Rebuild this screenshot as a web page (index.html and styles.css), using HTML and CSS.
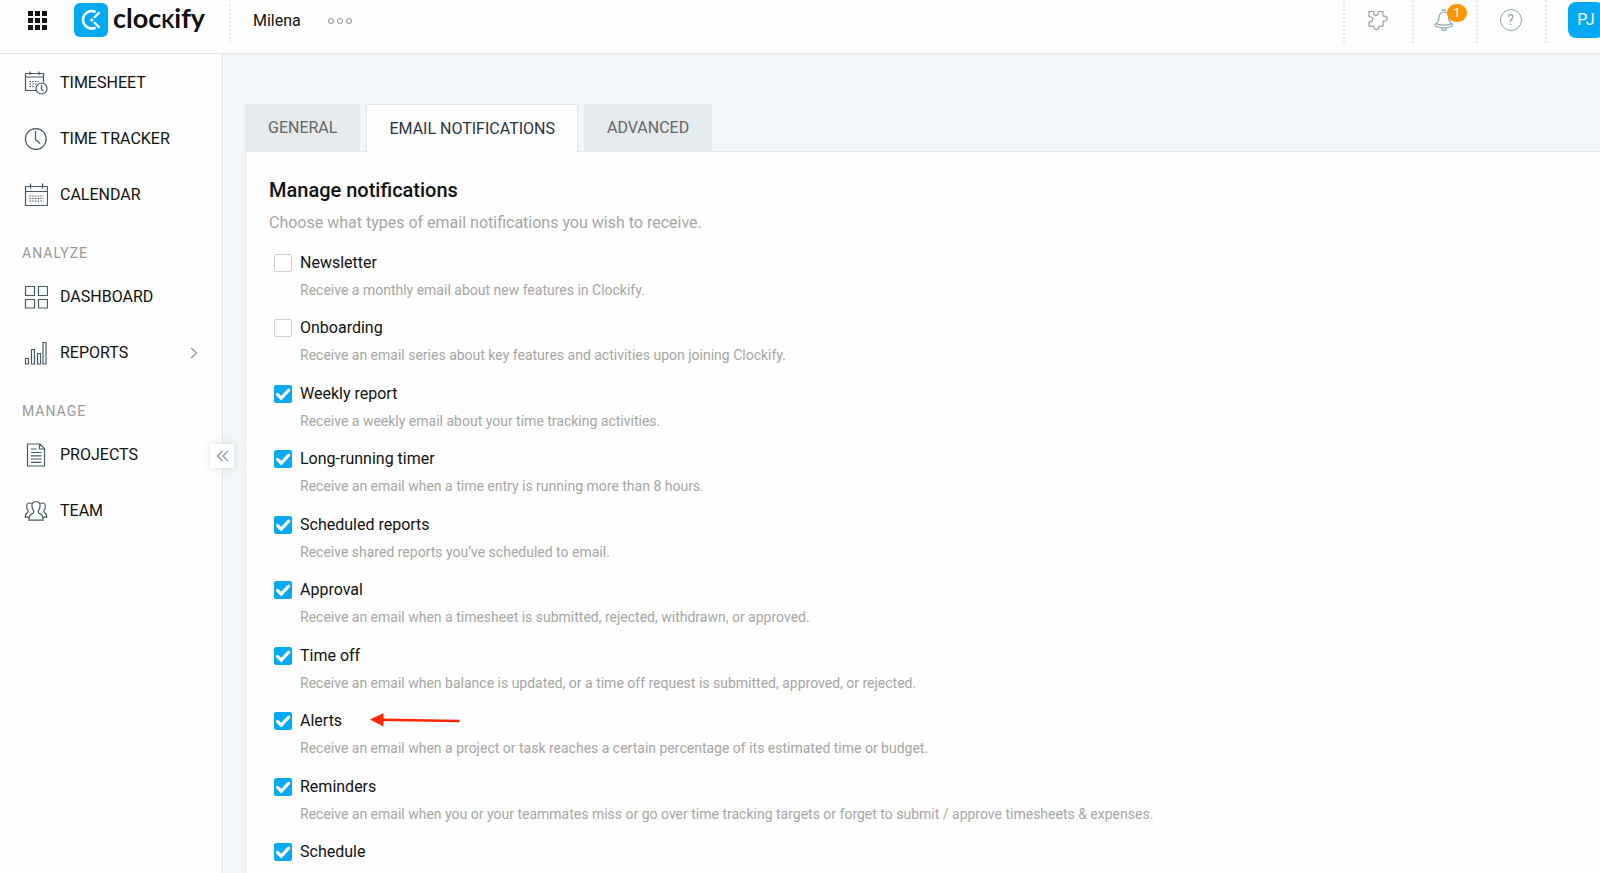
FILE: index.html
```html
<!DOCTYPE html>
<html lang="en">
<head>
<meta charset="utf-8">
<meta name="viewport" content="width=device-width, initial-scale=1">
<title>Clockify – Email notifications</title>
<link rel="stylesheet" href="styles.css">
</head>
<body>
<header class="topbar">
  <div class="topbar-brand">
    <button class="icon-button apps" aria-label="Apps">
      <svg width="19" height="19" viewBox="0 0 19 19" fill="#111"><path d="M0 0h5v5H0zM7 0h5v5H7zM14 0h5v5h-5zM0 7h5v5H0zM7 7h5v5H7zM14 7h5v5h-5zM0 14h5v5H0zM7 14h5v5H7zM14 14h5v5h-5z"/></svg>
    </button>
    <a class="brand" href="#">
      <svg width="34" height="34" viewBox="0 0 34 34" fill="none" aria-hidden="true">
        <rect width="34" height="34" rx="6" fill="#03a9f4"/>
        <path d="M20.6 8.6A8.7 8.7 0 1 0 20.6 25" stroke="#fff" stroke-width="2.6" stroke-linecap="round"/>
        <path d="M20.6 14.2l4.3-4.3M20.6 19.8l4.3 4.3" stroke="#fff" stroke-width="2.3" stroke-linecap="round"/>
        <circle cx="17.8" cy="17" r="1.6" fill="#fff"/>
      </svg>
      <span class="wordmark">cloc<span class="wordmark-k">k</span>ify</span>
    </a>
  </div>
  <div class="workspace">
    <span>Milena</span>
    <button class="icon-button" aria-label="Workspace menu">
      <svg width="26" height="8" viewBox="0 0 26 8" fill="none" stroke="#a3a3a3" stroke-width="1.1"><circle cx="4" cy="4" r="2.5"/><circle cx="13" cy="4" r="2.5"/><circle cx="22" cy="4" r="2.5"/></svg>
    </button>
  </div>
  <div class="topbar-tools">
    <button class="tool" aria-label="Integrations">
      <svg width="22" height="22" viewBox="0 0 22 22" fill="none" stroke="#8fa4ae" stroke-width="1.2" stroke-linejoin="round"><path d="M2 2.500h3.800c.7 0 1 .5.800 1.100-.4 1.500.7 2.700 2.300 2.700s2.700-1.200 2.300-2.700c-.2-.6.1-1.100.8-1.100h4v3.900c0 .7.500 1 1.100.8 1.600-.5 3.100.7 3.100 2.400s-1.500 2.900-3.100 2.400c-.6-.2-1.100.1-1.100.8v4.300h-3.400c-.7 0-.9.4-.8 1 .3 1.500-.8 2.500-2.400 2.500s-2.700-1-2.400-2.500c.1-.6-.1-1-.8-1H2v-3.600c0-.7.500-1 1.100-.8 1.500.4 2.600-.8 2.600-2.400S4.600 7.500 3.100 7.900C2.500 8.100 2 7.800 2 7.100z"/></svg>
    </button>
    <button class="tool" aria-label="Notifications, 1 unread">
      <svg width="20" height="24" viewBox="0 0 20 24" fill="none" stroke="#8fa4ae" stroke-width="1.200" stroke-linejoin="round"><path d="M8.200 3.300a1.700 1.700 0 1 1 3.400 0M9.900 4C6.500 4 5.200 6.300 5 9.500c-.2 3-.6 4.700-3.200 6.300-1 .7-.9 2 .2 2.500 4.500 1.900 11 1.900 15.700 0 1.100-.5 1.200-1.800.2-2.500-2.600-1.600-3-3.300-3.200-6.300C14.500 6.300 13.200 4 9.900 4zM2.500 15.900c4.500 1.600 10.300 1.600 14.800 0M7.300 19.700c.1 1.600 1 2.700 2.600 2.700s2.500-1.100 2.600-2.700"/></svg>
      <span class="badge">1</span>
    </button>
    <button class="tool" aria-label="Help">
      <span class="help">?</span>
    </button>
    <div class="account"><button class="avatar" aria-label="Account">PJ</button></div>
  </div>
</header>

<div class="layout">
  <nav class="sidebar">
    <a class="nav-item" href="#">
      <svg class="nav-icon" viewBox="0 0 24 24"><path d="M12.500 19.500H1.500v-17h18v9M1.500 6h18M6 .5v3.500M15 .5v3.500"/><path class="dots" d="M5.500 10.500h9M5.500 13h7M5.500 15.500h5"/><circle cx="17.500" cy="17.500" r="5.500"/><path d="M17.500 14v3.800l1.800 2"/></svg>
      <span>TIMESHEET</span>
    </a>
    <a class="nav-item" href="#">
      <svg class="nav-icon" viewBox="0 0 24 24"><circle cx="11.800" cy="12" r="10.400"/><path d="M11.500 4v8.500l4.500 4"/></svg>
      <span>TIME TRACKER</span>
    </a>
    <a class="nav-item" href="#">
      <svg class="nav-icon" viewBox="0 0 24 24"><path d="M1.500 3.500h22v19h-22zM1.500 8.500h22M6.500.5v5M18.500.5v5"/><path class="dots" d="M5.500 13h14M5.500 15.500h14M5.500 18h14"/></svg>
      <span>CALENDAR</span>
    </a>
    <h2 class="nav-heading">ANALYZE</h2>
    <a class="nav-item" href="#">
      <svg class="nav-icon" viewBox="0 0 24 24"><path d="M1.500 1.500h9v9h-9zM14.500 1.500h9v9h-9zM1.500 14.500h9v8.500h-9zM14.500 14.500h9v8.500h-9z"/></svg>
      <span>DASHBOARD</span>
    </a>
    <a class="nav-item" href="#">
      <svg class="nav-icon" viewBox="0 0 24 24"><path d="M1.500 17.500h3v5.500h-3zM7.500 8.500h3V23h-3zM13.500 12.500h3V23h-3zM19 1.500h3V23h-3z"/></svg>
      <span>REPORTS</span>
      <svg class="nav-chevron" width="8" height="12" viewBox="0 0 8 12" fill="none" stroke="#90a4ae" stroke-width="1.500"><path d="M1 1l5.500 5L1 11"/></svg>
    </a>
    <h2 class="nav-heading">MANAGE</h2>
    <a class="nav-item" href="#">
      <svg class="nav-icon" viewBox="0 0 24 24"><path d="M3.500 1h12.500l4.500 4.500V23h-17zM15.500 1v5h5M7 6h5.500M7 9.500h10.500M7 12.800h10.500M7 16h10.500M7 19.300h10.500"/></svg>
      <span>PROJECTS</span>
    </a>
    <a class="nav-item" href="#">
      <svg class="nav-icon" viewBox="0 0 24 24"><path d="M12 2.500c-3 0-4.300 2-4 4.500.1 2.500.8 3.600 1.700 4.700.3 1.700-.2 2.600-1.700 3.200-2.400 1-3.200 2.500-3.200 6.300h14.400c0-3.800-.8-5.300-3.200-6.300-1.500-.6-2-1.500-1.700-3.200.9-1.100 1.600-2.200 1.700-4.700.3-2.500-1-4.500-4-4.500zM7.500 4.300C4 3.300 2.500 5 2.700 8c.1 1.700.6 2.700 1.400 3.600.2 1.500-.3 2.100-1.400 2.800-1.100.6-1.500 2-1.500 3.800h3.500M16.500 4.300C20 3.300 21.500 5 21.300 8c-.1 1.700-.6 2.700-1.400 3.600-.2 1.500.3 2.100 1.400 2.800 1.100.6 1.500 2 1.500 3.800h-3.500"/></svg>
      <span>TEAM</span>
    </a>
    <button class="collapse" aria-label="Collapse sidebar">
      <svg width="13" height="12" viewBox="0 0 13 12" fill="none" stroke="#90a4ae" stroke-width="1.500"><path d="M6.500 1L1.500 6l5 5M12 1L7 6l5 5"/></svg>
    </button>
  </nav>

  <main class="content">
    <div class="tabs" role="tablist">
      <button class="tab" role="tab" aria-selected="false">GENERAL</button>
      <button class="tab tab-active" role="tab" aria-selected="true">EMAIL NOTIFICATIONS</button>
      <button class="tab" role="tab" aria-selected="false">ADVANCED</button>
    </div>
    <section class="panel">
      <h1 class="panel-title">Manage notifications</h1>
      <p class="panel-lead">Choose what types of email notifications you wish to receive.</p>
      <ul class="options">
        <li class="option">
          <div class="option-row"><input class="check" type="checkbox" id="newsletter"><label for="newsletter">Newsletter</label></div>
          <p class="option-note">Receive a monthly email about new features in Clockify.</p>
        </li>
        <li class="option">
          <div class="option-row"><input class="check" type="checkbox" id="onboarding"><label for="onboarding">Onboarding</label></div>
          <p class="option-note">Receive an email series about key features and activities upon joining Clockify.</p>
        </li>
        <li class="option">
          <div class="option-row"><input class="check" type="checkbox" id="weekly" checked><label for="weekly">Weekly report</label></div>
          <p class="option-note">Receive a weekly email about your time tracking activities.</p>
        </li>
        <li class="option">
          <div class="option-row"><input class="check" type="checkbox" id="timer" checked><label for="timer">Long-running timer</label></div>
          <p class="option-note">Receive an email when a time entry is running more than 8 hours.</p>
        </li>
        <li class="option">
          <div class="option-row"><input class="check" type="checkbox" id="scheduled" checked><label for="scheduled">Scheduled reports</label></div>
          <p class="option-note">Receive shared reports you’ve scheduled to email.</p>
        </li>
        <li class="option">
          <div class="option-row"><input class="check" type="checkbox" id="approval" checked><label for="approval">Approval</label></div>
          <p class="option-note">Receive an email when a timesheet is submitted, rejected, withdrawn, or approved.</p>
        </li>
        <li class="option">
          <div class="option-row"><input class="check" type="checkbox" id="timeoff" checked><label for="timeoff">Time off</label></div>
          <p class="option-note">Receive an email when balance is updated, or a time off request is submitted, approved, or rejected.</p>
        </li>
        <li class="option">
          <div class="option-row"><input class="check" type="checkbox" id="alerts" checked><label for="alerts">Alerts</label>
            <svg class="pointer" width="90" height="16" viewBox="0 0 90 16" aria-hidden="true"><path d="M0 6.500L13.500 0v13.500z" fill="#ff2600"/><path d="M12 6.800L89.500 8" stroke="#ff2600" stroke-width="2.600"/></svg>
          </div>
          <p class="option-note">Receive an email when a project or task reaches a certain percentage of its estimated time or budget.</p>
        </li>
        <li class="option">
          <div class="option-row"><input class="check" type="checkbox" id="reminders" checked><label for="reminders">Reminders</label></div>
          <p class="option-note">Receive an email when you or your teammates miss or go over time tracking targets or forget to submit / approve timesheets &amp; expenses.</p>
        </li>
        <li class="option">
          <div class="option-row"><input class="check" type="checkbox" id="schedule" checked><label for="schedule">Schedule</label></div>
        </li>
      </ul>
    </section>
  </main>
</div>
</body>
</html>
```
FILE: styles.css
```css
:root {
  --surface: #fefefe;
  --page: #f2f6f8;
  --line: #e0e8ee;
  --blue: #03a9f4;
  --muted: #a6a6a6;
}

* { box-sizing: border-box; }

body {
  margin: 0;
  min-height: 100vh;
  display: flex;
  flex-direction: column;
  background: var(--page);
  color: #111;
  font: 16px/20px Roboto, "Liberation Sans", sans-serif;
}

h1, h2, p, ul { margin: 0; padding: 0; }
ul { list-style: none; }
a { color: inherit; text-decoration: none; }
svg { display: block; flex: none; }

button {
  margin: 0;
  padding: 0;
  border: 0;
  background: none;
  color: inherit;
  font: inherit;
  cursor: pointer;
}

/* Top bar */
.topbar {
  display: flex;
  align-items: flex-start;
  padding-bottom: 10px;
  border-bottom: 1px solid var(--line);
  background: var(--surface);
  overflow: hidden;
}

.topbar-brand, .workspace, .topbar-tools { display: flex; height: 43px; }

.topbar-brand {
  align-items: center;
  gap: 27px;
  width: 229px;
  padding: 0 0 3px 28px;
}

.brand { display: flex; align-items: center; gap: 5px; }

.wordmark {
  padding-bottom: 4px;
  font: 700 27px/30px Lato, sans-serif;
}

.wordmark-k { font-variant-caps: small-caps; }

.workspace {
  align-items: center;
  gap: 26px;
  padding: 0 0 2px 22px;
  border-left: 2px dotted #eceff1;
}

.topbar-tools { margin-left: auto; }

.tool, .account {
  display: flex;
  align-items: center;
  justify-content: center;
  padding-bottom: 4px;
  border-left: 2px dotted #e2e8eb;
}

.tool { position: relative; width: 69px; padding-right: 2px; }
.tool:nth-child(2) { width: 64px; }

.badge {
  position: absolute;
  top: 4px;
  left: 33px;
  width: 20px;
  height: 18px;
  border-radius: 9px;
  background: #ff9800;
  color: #fff;
  font-size: 13px;
  line-height: 18px;
}

.help {
  width: 22px;
  height: 22px;
  border: 1px solid #8fa4ae;
  border-radius: 50%;
  color: #8fa4ae;
  font-size: 14px;
  line-height: 20px;
}

.account { width: 55px; justify-content: flex-start; padding-left: 21px; padding-bottom: 3px; }

.avatar {
  flex: none;
  width: 36px;
  height: 36px;
  border-radius: 8px;
  background: var(--blue);
  color: #fff;
}

/* Sidebar */
.layout { display: flex; flex: 1; }

.sidebar {
  position: relative;
  flex: none;
  width: 223px;
  padding-top: 1px;
  border-right: 1px solid var(--line);
  background: var(--surface);
}

.nav-item {
  display: flex;
  align-items: center;
  gap: 12px;
  height: 56px;
  padding: 0 24px;
}

.nav-icon {
  width: 24px;
  height: 24px;
  fill: none;
  stroke: #455a64;
  stroke-width: 1.2;
}

.nav-icon .dots { stroke-dasharray: 1.5 1.2; }
.nav-chevron { margin-left: auto; }

.nav-heading {
  padding: 22px 22px 8px;
  color: #999;
  font-size: 14px;
  font-weight: 400;
  line-height: 16px;
  letter-spacing: 1px;
}

.collapse {
  position: absolute;
  top: 390px;
  right: -12px;
  display: grid;
  place-items: center;
  width: 24px;
  height: 24px;
  background: #fff;
  box-shadow: 0 0 8px rgba(0, 0, 0, 0.12);
}

/* Settings */
.content {
  display: flex;
  flex: 1;
  flex-direction: column;
  min-width: 0;
  padding: 50px 0 0 22px;
}

.tabs { display: flex; gap: 6px; }

.tab {
  height: 47px;
  padding: 0 22px;
  border: 1px solid #e4eaee;
  border-bottom: 0;
  border-radius: 2px 2px 0 0;
  background: #e4eaee;
  color: #666;
}

.tab-active {
  z-index: 1;
  height: 48px;
  margin-bottom: -1px;
  border-color: var(--line);
  background: var(--surface);
  color: #263545;
}

.panel {
  flex: 1;
  padding: 26px 23px 0;
  border: 1px solid var(--line);
  border-width: 1px 0 0 1px;
  background: var(--surface);
}

.panel-title { font-size: 20px; font-weight: 500; line-height: 24px; }
.panel-lead { margin-top: 11px; color: var(--muted); }
.options { margin-top: 20px; padding-left: 5px; }
.option { margin-bottom: 19px; }
.option:nth-child(even) { margin-bottom: 20px; }
.option:last-child { margin-bottom: 0; }
.option-row { display: flex; align-items: center; gap: 8px; }

.option-note {
  margin-top: 8px;
  padding-left: 26px;
  color: var(--muted);
  font-size: 14px;
  line-height: 18px;
}

.check {
  appearance: none;
  width: 18px;
  height: 18px;
  margin: 0;
  border: 1px solid #c6d2d9;
  border-radius: 2px;
  background: #fff;
}

.check:checked {
  border-color: var(--blue);
  background: var(--blue) url("data:image/svg+xml,%3Csvg xmlns='http://www.w3.org/2000/svg' viewBox='0 0 18 18'%3E%3Cpath d='M3.500 9.500l3.700 3.700 7.500-8' fill='none' stroke='white' stroke-width='3.200' stroke-linecap='round'/%3E%3C/svg%3E") border-box;
}

.pointer { margin-left: 20px; }
```
